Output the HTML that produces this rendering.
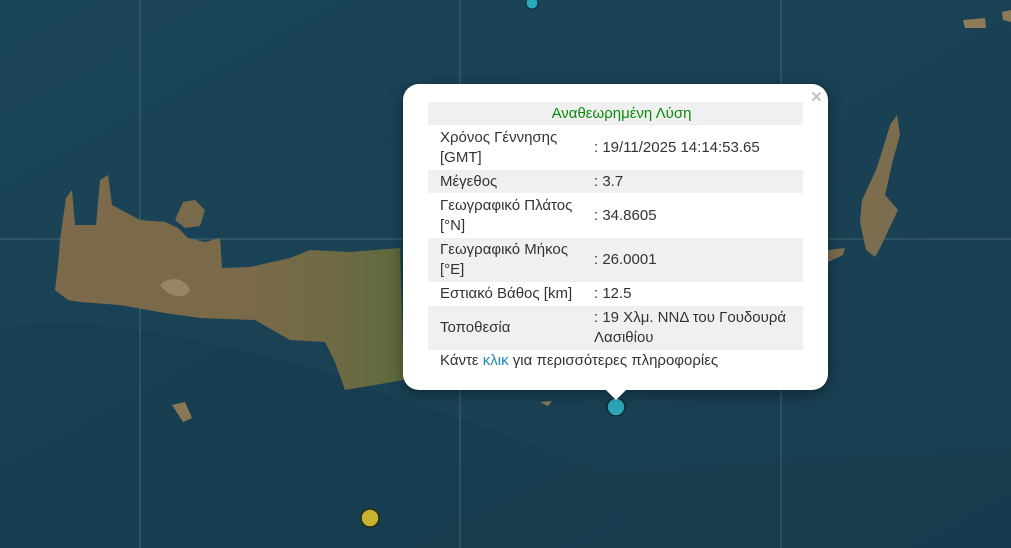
<!DOCTYPE html>
<html><head><meta charset="utf-8"><style>
html,body{margin:0;padding:0;width:1011px;height:548px;overflow:hidden;background:#1a4255;font-family:"Liberation Sans","Noto Sans CJK SC",sans-serif}
.map{position:absolute;left:0;top:0}
.pop{position:absolute;left:403px;top:84px;width:425px;height:306px;background:#fff;border-radius:16px;box-shadow:0 3px 14px rgba(0,0,0,.4)}
.tip{position:absolute;left:605px;top:389px;width:0;height:0;border-left:11px solid transparent;border-right:11px solid transparent;border-top:11px solid #fff}
.close{position:absolute;right:6px;top:3px;color:#c3c3c3;font:bold 19px "Liberation Sans",sans-serif}
table{position:absolute;left:25px;top:18px;width:375px;border-collapse:collapse;font-size:15px;color:#333;line-height:20px}
td{padding:0 0 0 12px;vertical-align:middle}
td.v{padding-left:0}
tr.g{background:#f0f0f0}
.t{text-align:center;color:#0a8a0a;height:23px}
.f{position:absolute;left:37px;top:268px;font-size:15px;color:#333}
.f span{color:#1a8ab0}
</style></head><body>
<svg class="map" width="1011" height="548" viewBox="0 0 1011 548">
<defs><linearGradient id="sea" x1="0" y1="0" x2="1" y2="1"><stop offset="0" stop-color="#1b4558"/><stop offset="1" stop-color="#183d50"/></linearGradient>
<linearGradient id="land" x1="0" y1="0" x2="1" y2="0"><stop offset="0" stop-color="#7c6a4a"/><stop offset="0.55" stop-color="#7a6a4a"/><stop offset="0.8" stop-color="#6f6a44"/><stop offset="1" stop-color="#5d6a3c"/></linearGradient></defs>
<rect width="1011" height="548" fill="url(#sea)"/>
<path d="M0,330 C80,310 200,340 320,370 C400,400 500,430 600,470 L1011,450 L1011,548 L0,548Z" fill="#15384a" opacity=".35"/>
<g stroke="#6f8a96" stroke-width="1" opacity=".5"><line x1="140" y1="0" x2="140" y2="548"/><line x1="460" y1="0" x2="460" y2="548"/><line x1="781" y1="0" x2="781" y2="548"/><line x1="0" y1="239" x2="1011" y2="239"/></g>
<path d="M60,240 L66,198 L72,190 L75,225 L96,225 L100,180 L108,175 L112,205 L140,220 L165,222 L178,228 L188,238 L205,242 L220,238 L222,268 L250,267 L290,258 L310,250 L350,252 L400,248 L404,380 L345,390 L335,362 L325,342 L290,340 L255,320 L200,318 L165,313 L120,305 L80,302 L68,300 L55,290 L58,265Z" fill="url(#land)"/>
<path d="M175,220 L183,202 L195,200 L205,210 L200,226 L185,228Z" fill="#7a6a4c"/>
<path d="M160,285 C170,275 185,278 190,290 C185,300 170,298 160,285Z" fill="#a89a7c" opacity=".6"/>
<path d="M897,115 L900,135 L893,160 L885,195 L898,210 L880,248 L875,257 L866,250 L860,222 L862,200 L876,170 L884,145 L890,125Z" fill="#7d6d4f"/>
<path d="M828,250 L845,248 L843,255 L828,262Z" fill="#7d6d4f"/>
<path d="M963,20 L985,18 L986,28 L965,28Z" fill="#8e7b5c"/>
<path d="M1002,12 L1011,10 L1011,22 L1003,20Z" fill="#8e7b5c"/>
<path d="M172,405 L185,402 L192,418 L183,422Z" fill="#8a7756"/>
<path d="M540,402 L552,401 L548,406Z" fill="#8a7756"/>
<circle cx="532" cy="3" r="6" fill="#28a9bf" stroke="#123" stroke-width="1"/>
<circle cx="616" cy="407" r="9" fill="#2aa4b6" stroke="#10262e" stroke-width="1.5"/>
<circle cx="370" cy="518" r="9" fill="#c8b232" stroke="#2a2a10" stroke-width="1.5"/>
</svg>
<div class="pop">
<div class="close">×</div>
<table>
<tr class="g"><td colspan="2" class="t">Αναθεωρημένη Λύση</td></tr>
<tr style="height:45px"><td style="width:154px">Χρόνος Γέννησης<br>[GMT]</td><td class="v">: 19/11/2025 14:14:53.65</td></tr>
<tr class="g" style="height:23px"><td>Μέγεθος</td><td class="v">: 3.7</td></tr>
<tr style="height:45px"><td>Γεωγραφικό Πλάτος<br>[°N]</td><td class="v">: 34.8605</td></tr>
<tr class="g" style="height:44px"><td>Γεωγραφικό Μήκος<br>[°E]</td><td class="v">: 26.0001</td></tr>
<tr style="height:24px"><td>Εστιακό Βάθος [km]</td><td class="v">: 12.5</td></tr>
<tr class="g" style="height:44px"><td>Τοποθεσία</td><td class="v">: 19 Χλμ. ΝΝΔ του Γουδουρά<br>Λασιθίου</td></tr>
</table>
<div class="f">Κάντε <span>κλικ</span> για περισσότερες πληροφορίες</div>
</div>
<div class="tip"></div>
</body></html>
